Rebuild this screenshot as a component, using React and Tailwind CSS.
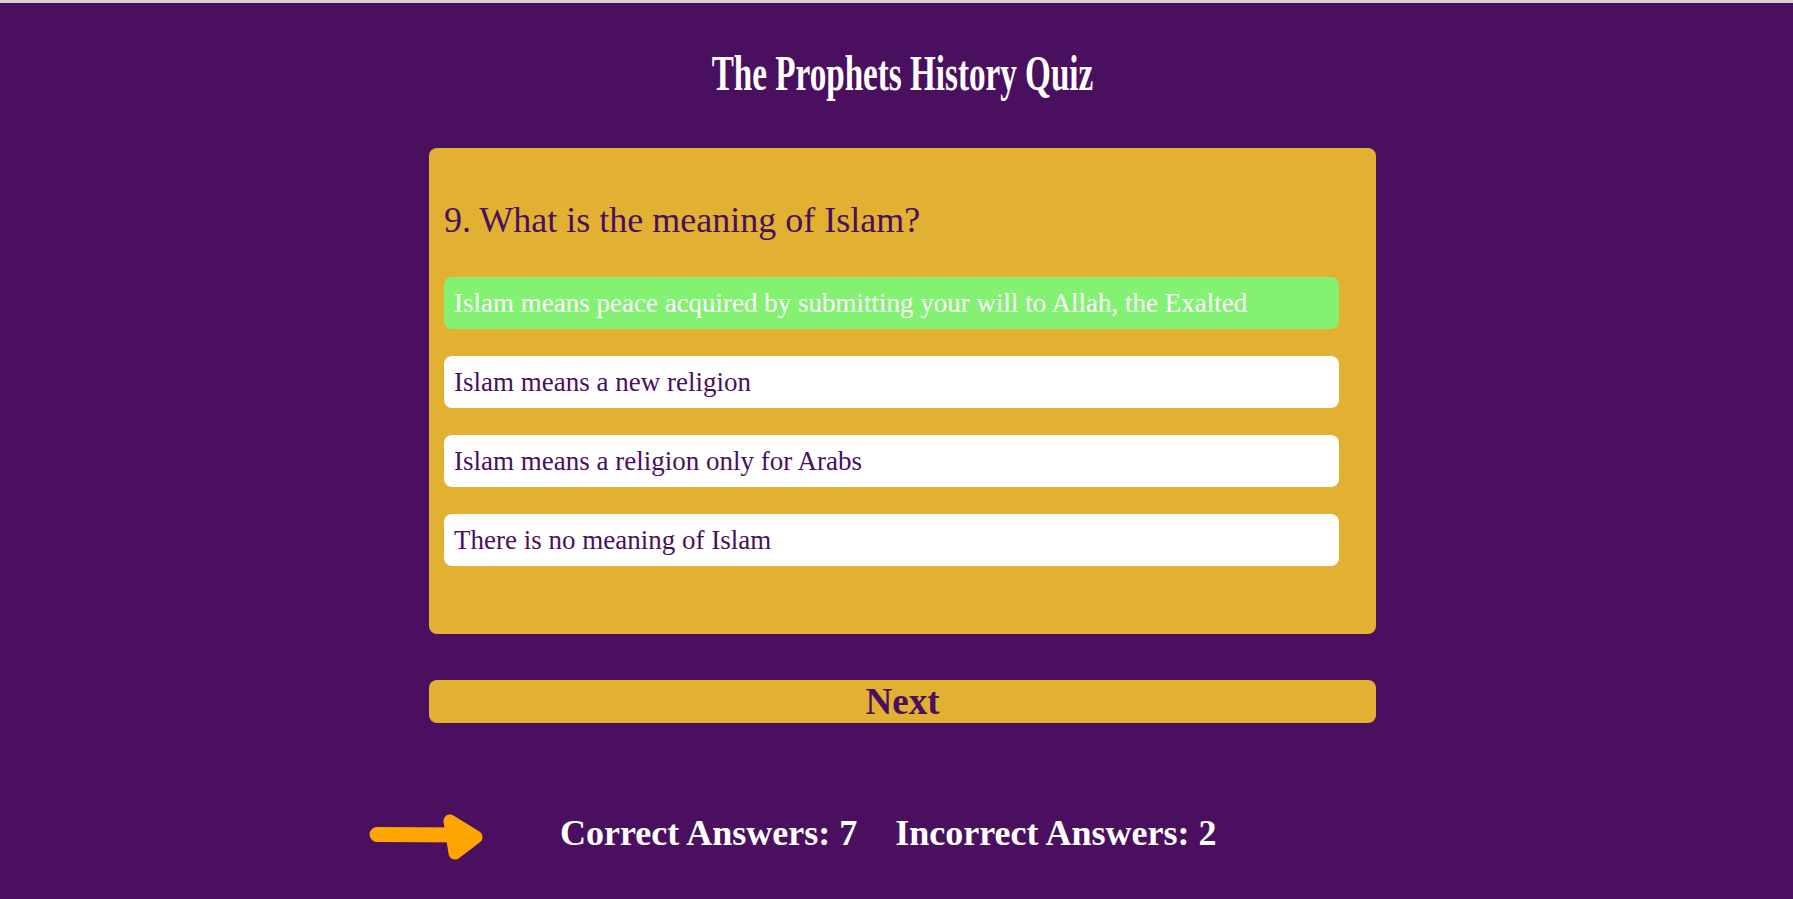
const options = [
  { text: 'Islam means peace acquired by submitting your will to Allah, the Exalted', correct: true },
  { text: 'Islam means a new religion' },
  { text: 'Islam means a religion only for Arabs' },
  { text: 'There is no meaning of Islam' },
];

// hand drawn looking arrow pointing at the score
const Arrow = () => (
  <svg width="116" height="47" viewBox="0 0 116 47" className="-ml-[60px] shrink-0">
    <path d="M8 21.5 L96 22" stroke="#ffa500" strokeWidth="15" strokeLinecap="round" fill="none" />
    <path
      d="M81 8 L107 24 L86 40 Z"
      stroke="#ffa500"
      strokeWidth="13"
      strokeLinecap="round"
      strokeLinejoin="round"
      fill="#ffa500"
    />
  </svg>
);

export default function App() {
  return (
    <div className="min-h-screen bg-[#4a0f5e] border-t-[3px] border-[#d9d1d4] pl-[12px] font-['Liberation_Serif',serif]">
      <div className="mx-auto w-[947px] flex flex-col">
        <h1 className="pt-[42px] text-center text-[51px] leading-[56px] font-bold text-white">
          <span className="inline-block scale-x-[0.65]">The Prophets History Quiz</span>
        </h1>

        <div className="mt-[47px] bg-[#e2b132] rounded-lg px-[15px] pt-[52px] pb-[68px]">
          <h2 className="text-[36px] leading-[40px] text-[#4a0f5e]">9. What is the meaning of Islam?</h2>
          <div className="mt-[37px] flex flex-col gap-[27px]">
            {options.map((opt, i) => (
              <div
                key={i}
                className={`w-[895px] h-[52px] leading-[52px] px-[10px] rounded-lg text-[27px] ${
                  opt.correct ? 'bg-[#83f273] text-white' : 'bg-white text-[#4a0f5e]'
                }`}
              >
                {opt.text}
              </div>
            ))}
          </div>
        </div>

        <button className="mt-[46px] h-[43px] rounded-lg bg-[#e2b132] text-[#4a0f5e] text-[37px] leading-[40px] font-bold">
          Next
        </button>

        <div className="mt-[90px] flex items-start">
          <Arrow />
          <p className="ml-[75px] text-[36px] leading-[40px] font-bold text-white flex gap-[38px]">
            <span>Correct Answers: 7</span>
            <span>Incorrect Answers: 2</span>
          </p>
        </div>
      </div>
    </div>
  );
}
